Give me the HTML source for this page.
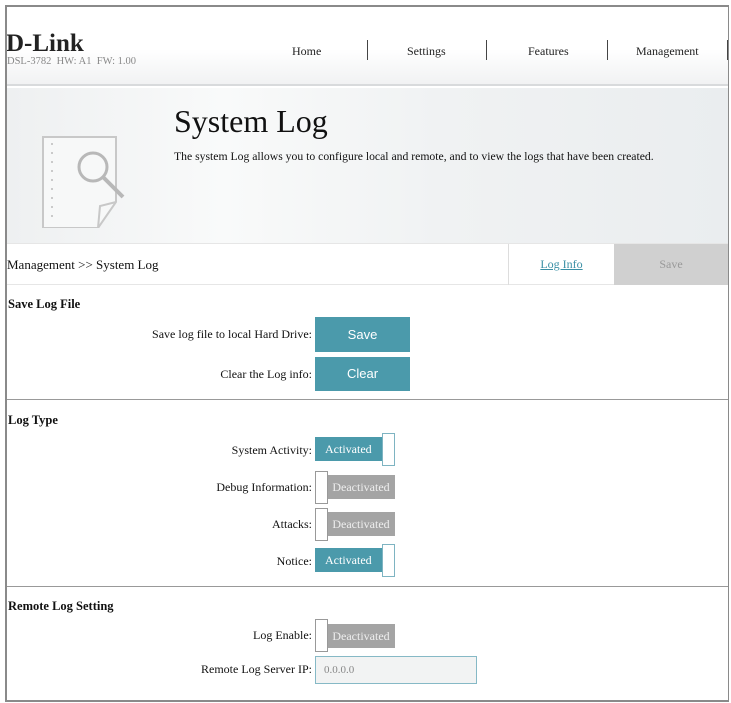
<!DOCTYPE html>
<html><head><meta charset="utf-8"><style>
*{margin:0;padding:0;box-sizing:border-box}
body{width:731px;height:703px;background:#fff;font-family:"Liberation Serif",serif;position:relative;overflow:hidden;color:#111}
.a{position:absolute}
.frame{left:5px;top:5px;width:724px;height:697px;border:2px solid #8a8a8a;border-right-width:1px}
.hdr{left:7px;top:7px;width:721px;height:79px;background:linear-gradient(#fff 0,#fff 55%,#f1f2f3 100%);border-bottom:2px solid #d8dadc}
.ban{left:7px;top:88px;width:721px;height:155px;background:linear-gradient(90deg,#eef0f1 0,#f9fafa 30%,#f0f2f3 60%,#eaedef 100%)}
.nav{top:44px;font-size:12px;color:#222}
.sep{top:40px;width:1px;height:20px;background:#444}
.lbl{font-size:12px;text-align:right;width:300px;left:12px}
.btn{background:#4b9aab;color:#fff;font-family:"Liberation Sans",sans-serif;font-size:13px;text-align:center}
.act{background:#4b9aab;color:#fff;font-size:12px;height:24px;width:69px;line-height:24px;padding-left:10px}
.knob{width:13px;height:33px;background:#fff;border:1px solid #7eb4c2}
.deact{background:#a4a4a4;color:#eee;font-size:12px;height:24px;width:68px;line-height:24px;text-align:center}
.kg{width:13px;height:33px;background:#fff;border:1px solid #999}
.h{font-weight:bold;font-size:12.5px;left:8px}
.hr{left:7px;width:721px;height:1px;background:#999}
</style></head><body>
<div class="a hdr"></div>
<div class="a ban"></div>
<div class="a" style="left:6px;top:30px;font-size:25px;font-weight:bold;letter-spacing:0;color:#222">D-Link</div>
<div class="a" style="left:7px;top:56px;font-size:10.5px;color:#888">DSL-3782&nbsp; HW: A1&nbsp; FW: 1.00</div>
<div class="a nav" style="left:292px">Home</div>
<div class="a sep" style="left:367px"></div>
<div class="a nav" style="left:407px">Settings</div>
<div class="a sep" style="left:486px"></div>
<div class="a nav" style="left:528px">Features</div>
<div class="a sep" style="left:607px"></div>
<div class="a nav" style="left:636px">Management</div>
<div class="a sep" style="left:727px"></div>
<svg class="a" style="left:38px;top:132px" width="90" height="96" viewBox="0 0 90 96">
<path d="M5 5 H78 V70 L60 96 H5 Z" fill="#f7f8f8" stroke="#c8c8c8" stroke-width="2"/>
<path d="M60 96 L62 74 L78 70" fill="none" stroke="#c8c8c8" stroke-width="2"/>
<g fill="#bbb"><circle cx="14" cy="12" r="1"/><circle cx="14" cy="21" r="1"/><circle cx="14" cy="30" r="1"/><circle cx="14" cy="39" r="1"/><circle cx="14" cy="48" r="1"/><circle cx="14" cy="57" r="1"/><circle cx="14" cy="66" r="1"/><circle cx="14" cy="75" r="1"/><circle cx="14" cy="84" r="1"/></g>
<circle cx="55" cy="35" r="14" fill="none" stroke="#b8b8b8" stroke-width="3"/>
<path d="M65 45 L85 65" stroke="#b8b8b8" stroke-width="4"/>
</svg>
<div class="a" style="left:174px;top:103px;font-size:32px">System Log</div>
<div class="a" style="left:174px;top:150px;font-size:11.7px">The system Log allows you to configure local and remote, and to view the logs that have been created.</div>
<div class="a" style="left:7px;top:243px;width:721px;height:42px;border-top:1px solid #e6e6e6;border-bottom:1px solid #e6e6e6"></div>
<div class="a" style="left:7px;top:257px;font-size:13px">Management &gt;&gt; System Log</div>
<div class="a" style="left:508px;top:244px;width:106px;height:41px;border-left:1px solid #ddd;text-align:center;line-height:40px;font-size:12px;color:#3a8fa5;text-decoration:underline">Log Info</div>
<div class="a" style="left:614px;top:244px;width:114px;height:41px;background:#d0d0d0;text-align:center;line-height:40px;font-size:12px;color:#999">Save</div>
<div class="a h" style="top:297px">Save Log File</div>
<div class="a lbl" style="top:327px">Save log file to local Hard Drive:</div>
<div class="a btn" style="left:315px;top:317px;width:95px;height:35px;line-height:35px">Save</div>
<div class="a lbl" style="top:367px">Clear the Log info:</div>
<div class="a btn" style="left:315px;top:357px;width:95px;height:34px;line-height:34px">Clear</div>
<div class="a hr" style="top:399px"></div>
<div class="a h" style="top:413px">Log Type</div>
<div class="a lbl" style="top:443px">System Activity:</div>
<div class="a act" style="left:315px;top:437px">Activated</div>
<div class="a knob" style="left:382px;top:433px"></div>
<div class="a lbl" style="top:480px">Debug Information:</div>
<div class="a deact" style="left:327px;top:475px">Deactivated</div>
<div class="a kg" style="left:315px;top:471px"></div>
<div class="a lbl" style="top:517px">Attacks:</div>
<div class="a deact" style="left:327px;top:512px">Deactivated</div>
<div class="a kg" style="left:315px;top:508px"></div>
<div class="a lbl" style="top:554px">Notice:</div>
<div class="a act" style="left:315px;top:548px">Activated</div>
<div class="a knob" style="left:382px;top:544px"></div>
<div class="a hr" style="top:586px"></div>
<div class="a h" style="top:599px">Remote Log Setting</div>
<div class="a lbl" style="top:628px">Log Enable:</div>
<div class="a deact" style="left:327px;top:624px">Deactivated</div>
<div class="a kg" style="left:315px;top:619px"></div>
<div class="a lbl" style="top:662px">Remote Log Server IP:</div>
<div class="a" style="left:315px;top:656px;width:162px;height:28px;background:#f2f3f3;border:1px solid #86b9c6;font-size:11px;color:#888;line-height:26px;padding-left:8px">0.0.0.0</div>
<div class="a frame"></div>
</body></html>
